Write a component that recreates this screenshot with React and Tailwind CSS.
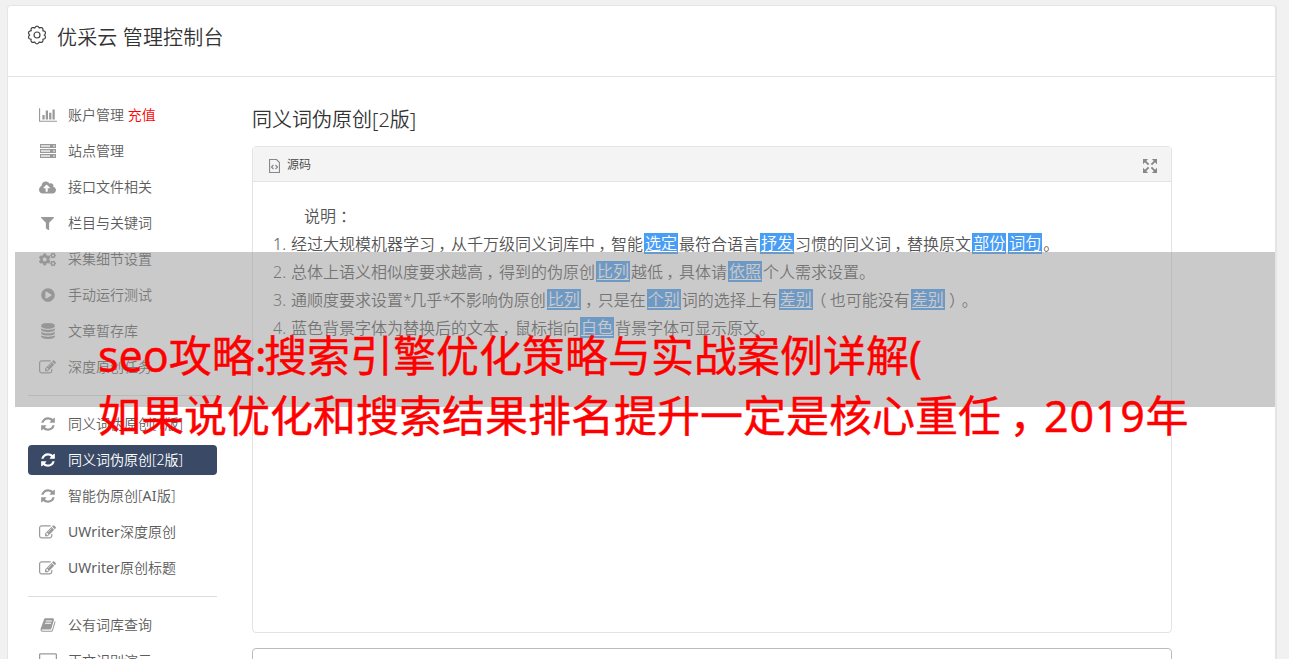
import { FaCloudUploadAlt, FaFilter, FaCogs, FaPlayCircle } from 'react-icons/fa'

const PATHS = {
  chart: 'M640 896v512h-256v-512h256zm384-512v1024h-256v-1024h256zm1024 1152v128h-2048v-1536h128v1408h1920zm-640-896v768h-256v-768h256zm384-384v1152h-256v-1152h256z',
  database: 'M896 768q237 0 443-43t325-127v170q0 69-103 128t-280 93.5-385 34.5-385-34.5-280-93.5-103-128v-170q119 84 325 127t443 43zm0 768q237 0 443-43t325-127v170q0 69-103 128t-280 93.5-385 34.5-385-34.5-280-93.5-103-128v-170q119 84 325 127t443 43zm0-384q237 0 443-43t325-127v170q0 69-103 128t-280 93.5-385 34.5-385-34.5-280-93.5-103-128v-170q119 84 325 127t443 43zm0-1152q208 0 385 34.5t280 93.5 103 128v128q0 69-103 128t-280 93.5-385 34.5-385-34.5-280-93.5-103-128v-128q0-69 103-128t280-93.5 385-34.5z',
  edit: 'M888 1184l116-116-152-152-116 116v56h96v96h56zm440-720q-16-16-33 1l-350 350q-17 17-1 33t33-1l350-350q17-17 1-33zm80 594v190q0 119-84.5 203.5t-203.5 84.5h-832q-119 0-203.5-84.5t-84.5-203.5v-832q0-119 84.5-203.5t203.5-84.5h832q63 0 117 25 15 7 18 23 3 17-9 29l-49 49q-14 14-32 8-23-6-45-6h-832q-66 0-113 47t-47 113v832q0 66 47 113t113 47h832q66 0 113-47t47-113v-126q0-13 9-22l64-64q15-15 35-7t20 29zm-96-738l288 288-672 672h-288v-288zm444 132l-92 92-288-288 92-92q28-28 68-28t68 28l152 152q28 28 28 68t-28 68z',
  refresh: 'M1639 1056q0 5-1 7-64 268-268 434.5t-478 166.5q-146 0-282.5-55t-243.5-157l-129 129q-19 19-45 19t-45-19-19-45v-448q0-26 19-45t45-19h448q26 0 45 19t19 45-19 45l-137 137q71 66 161 102t187 36q134 0 250-65t186-179q11-17 53-117 8-23 30-23h192q13 0 22.5 9.5t9.5 22.5zm25-800v448q0 26-19 45t-45 19h-448q-26 0-45-19t-19-45 19-45l138-138q-148-137-349-137-134 0-250 65t-186 179q-11 17-53 117-8 23-30 23h-199q-13 0-22.5-9.5t-9.5-22.5v-7q65-268 270-434.5t480-166.5q146 0 284 55.5t245 156.5l130-129q19-19 45-19t45 19 19 45z',
  book: 'M1703 478q40 57 18 129l-275 906q-19 64-76.5 107.5t-122.5 43.5h-923q-77 0-148.5-53.5t-99.5-131.5q-24-67-2-127 0-4 3-27t4-37q1-8-3-21.5t-3-19.5q2-11 8-21t16.5-23.5 16.5-23.5q23-38 45-91.5t30-91.5q3-10 .5-30t-.5-28q3-11 17-28t17-23q21-36 42-92t25-90q1-9-2.5-32t.5-28q4-13 22-30.5t22-22.5q19-26 42.5-84.5t27.5-96.5q1-8-3-25.5t-2-26.5q2-8 9-18t18-23 17-21q8-12 16.5-30.5t15-35 16-36 19.5-32 26.5-23.5 36-11.5 47.5 5.5l-1 3q38-9 51-9h761q74 0 114 56t18 130l-274 906q-36 119-71.5 153.5t-128.5 34.5h-869q-27 0-38 15-11 16-1 43 24 70 144 70h923q29 0 56-15.5t35-41.5l300-987q7-22 5-57 38 15 59 43zm-1064 2q-4 13 2 22.5t20 9.5h608q13 0 25.5-9.5t16.5-22.5l21-64q4-13-2-22.5t-20-9.5h-608q-13 0-25.5 9.5t-16.5 22.5zm-83 256q-4 13 2 22.5t20 9.5h608q13 0 25.5-9.5t16.5-22.5l21-64q4-13-2-22.5t-20-9.5h-608q-13 0-25.5 9.5t-16.5 22.5z',
}

function Glyph({ name, w = 16, h = 16, box = '0 0 1792 1792' }) {
  return (
    <svg width={w} height={h} viewBox={box} fill="currentColor"><path d={PATHS[name]} /></svg>
  )
}

function ServerIcon() {
  return (
    <svg width="16" height="14" viewBox="0 0 16 14">
      {[0, 5, 10].map(y => (
        <g key={y}>
          <rect x="0" y={y} width="16" height="4" fill="currentColor" />
          <path d={`M1 ${y + 2}h9`} stroke="#fff" strokeWidth="2" opacity=".65" />
          <path d={`M13 ${y + 2}h2`} stroke="#fff" strokeWidth="1.4" opacity=".6" />
        </g>
      ))}
    </svg>
  )
}

function DesktopIcon() {
  return (
    <svg width="18" height="16" viewBox="0 0 18 16" fill="none" stroke="currentColor">
      <rect x=".6" y=".8" width="16.8" height="11.4" rx="1" strokeWidth="1.3" />
      <path d="M9 12v3M5 15h8" strokeWidth="1.5" />
    </svg>
  )
}

// 顶部齿轮：十瓣波浪外圈 + 内圆
function GearIcon() {
  const pts = []
  for (let i = 0; i <= 120; i++) {
    const a = (i / 120) * Math.PI * 2
    const r = 7.3 + 1.5 * Math.abs(Math.cos(a * 5 + Math.PI / 2))
    pts.push(`${(9 + r * Math.cos(a)).toFixed(2)} ${(9 + r * Math.sin(a)).toFixed(2)}`)
  }
  return (
    <svg width="18" height="18" viewBox="0 0 18 18" fill="none" stroke="#444" strokeWidth="1.2" className="overflow-visible">
      <path d={`M${pts.join('L')}Z`} />
      <circle cx="9" cy="9" r="3" />
    </svg>
  )
}

const refresh = <Glyph name="refresh" />
const edit = <Glyph name="edit" w={17} h={17} />

const GROUPS = [
  [
    { icon: <Glyph name="chart" w={18} box="0 0 2048 1792" />, text: '账户管理', extra: '充值' },
    { icon: <ServerIcon />, text: '站点管理' },
    { icon: <FaCloudUploadAlt size={17} />, text: '接口文件相关' },
    { icon: <FaFilter size={13} />, text: '栏目与关键词' },
    { icon: <FaCogs size={17} />, text: '采集细节设置' },
    { icon: <FaPlayCircle size={14} />, text: '手动运行测试' },
    { icon: <Glyph name="database" />, text: '文章暂存库' },
    { icon: edit, text: '深度原创任务' },
  ],
  [
    { icon: refresh, text: '同义词伪原创[1版]' },
    { icon: refresh, text: '同义词伪原创[2版]', active: true },
    { icon: refresh, text: '智能伪原创[AI版]' },
    { icon: edit, text: 'UWriter深度原创' },
    { icon: edit, text: 'UWriter原创标题' },
  ],
  [
    { icon: <Glyph name="book" />, text: '公有词库查询' },
    { icon: <DesktopIcon />, text: '正文识别演示' },
  ],
]

// 方括号内为替换后的词
const LINES = [
  '经过大规模机器学习，从千万级同义词库中，智能[选定]最符合语言[抒发]习惯的同义词，替换原文[部份][词句]。',
  '总体上语义相似度要求越高，得到的伪原创[比列]越低，具体请[依照]个人需求设置。',
  '通顺度要求设置*几乎*不影响伪原创[比列]，只是在[个别]词的选择上有[差别]（也可能没有[差别]）。',
  '蓝色背景字体为替换后的文本，鼠标指向[白色]背景字体可显示原文。',
]

// 标点占满一格并居中，数字和半角符号微调字距
const PUNCT = {
  '，': 'inline-block w-[1em] indent-[.2em]',
  '：': 'inline-block w-[1em] indent-[.25em]',
  '（': 'inline-block w-[1em] indent-[-.2em]',
  '）': 'inline-block w-[1em] indent-[.2em]',
  '*': 'tracking-[-1.5px]',
  ':': 'tracking-[-2.5px]',
  '2019': 'tracking-[.8px]',
  'UWriter': 'font-normal tracking-[.1px]',
  'AI': 'font-normal tracking-[.4px]',
}

function Text({ children }) {
  return children.split(/([，：（）*:]|2019|UWriter|AI)/).filter(Boolean).map((s, i) =>
    PUNCT[s] ? <span key={i} className={PUNCT[s]}>{s}</span> : s
  )
}

function Line({ text }) {
  return text.split(/(\[[^\]]+\])/).filter(Boolean).map((s, i) =>
    s[0] === '['
      ? <span key={i} className="mx-px mt-[3px] inline-block h-[21px] bg-[#489df5] px-px align-top leading-[21px] text-white underline decoration-1 underline-offset-2">{s.slice(1, -1)}</span>
      : <Text key={i}>{s}</Text>
  )
}

function MenuItem({ icon, text, extra, active }) {
  return (
    <li className={active
      ? 'flex h-[30px] items-center rounded bg-[#3a4a66] text-white'
      : 'flex h-[30px] items-center text-[#5c5c5c]'}>
      <span className={active ? 'flex w-10 justify-center pr-px' : 'flex w-10 justify-center pr-px text-[#999]'}>{icon}</span>
      <span className="whitespace-nowrap"><Text>{text}</Text>{extra && <span className="text-[#f00]"> {extra}</span>}</span>
    </li>
  )
}

export default function App() {
  return (
    <div lang="zh-CN" className="relative h-[659px] overflow-hidden bg-[#f1f1f1] px-[7px] pt-[5px] font-['Noto_Sans','Noto_Sans_CJK_SC',sans-serif] text-sm">
      <div className="h-[700px] w-[1270px] rounded border-2 border-[#e5e5e5] border-t border-l bg-white">
        <header className="flex h-[71px] items-start border-b border-[#e3e3e3] pt-4 pl-5">
          <span className="mt-1 mr-[11px]"><GearIcon /></span>
          <h1 className="text-[20px] leading-[31px] font-[350] tracking-[.15px] text-[#333]">优采云 管理控制台</h1>
        </header>

        <div className="flex pt-[23px] pl-5">
          <nav className="w-[189px] shrink-0 font-[350]">
            {GROUPS.map((items, i) => (
              <div key={i}>
                {i > 0 && <hr className="my-[13px] border-[#ddd]" />}
                <ul className="flex flex-col gap-1.5">
                  {items.map(it => <MenuItem key={it.text} {...it} />)}
                </ul>
              </div>
            ))}
          </nav>

          <main className="ml-[35px] w-[920px] shrink-0">
            <h2 className="mt-1 mb-[11px] text-[20px] leading-[31px] font-[350] text-[#333]">同义词伪原创[2版]</h2>
            <section className="h-[487px] rounded border border-[#e3e3e3]">
              <div className="flex h-[35px] items-center border-b border-[#e3e3e3] bg-[#f4f4f4] pr-[14px] pl-4 text-xs font-[350] text-[#444]">
                <svg className="mt-1 mr-[7px]" width="11" height="14" viewBox="0 0 11 14" fill="none" stroke="#888" strokeWidth="1.2">
                  <path d="M.5.5h7l3 3v10H.5z" />
                  <path d="M4.5 6L2.5 8l2 2M6.5 6l2 2-2 2" />
                </svg>
                <span className="mt-0.5">源码</span>
                <svg className="mt-[3px] ml-auto" width="14" height="14" viewBox="0 0 15 15" fill="#888" stroke="#888">
                  <path stroke="none" d="M0 0h5.5L0 5.5zM15 0v5.5L9.5 0zM0 15V9.5L5.5 15zM15 15H9.5L15 9.5z" />
                  <path strokeWidth="2" d="M2 2l4 4M13 2L9 6M2 13l4-4M13 13L9 9" />
                </svg>
              </div>
              <div className="pt-5 text-base leading-7 font-[350] text-[#555]">
                <p className="h-7 pl-[51px]"><Text>说明：</Text></p>
                <ol>
                  {LINES.map((t, i) => (
                    <li key={i} className="flex h-7 pl-5">
                      <span className="w-[18px] shrink-0">{i + 1}.</span>
                      <span className="whitespace-nowrap"><Line text={t} /></span>
                    </li>
                  ))}
                </ol>
              </div>
            </section>
            <div className="mt-[15px] h-20 rounded border border-[#bbb]" />
          </main>
        </div>
      </div>

      {/* 标题浮层 */}
      <div className="absolute top-[252px] left-[15px] h-[155px] w-[1260px] bg-[#959595]/50" />
      <div className="absolute top-[326px] left-[98px] text-[43px] leading-[60px] whitespace-nowrap text-[#f00] [-webkit-text-stroke:.4px_#f00]">
        <p><Text>seo攻略:搜索引擎优化策略与实战案例详解(</Text></p>
        <p><Text>如果说优化和搜索结果排名提升一定是核心重任，2019年</Text></p>
      </div>
    </div>
  )
}
